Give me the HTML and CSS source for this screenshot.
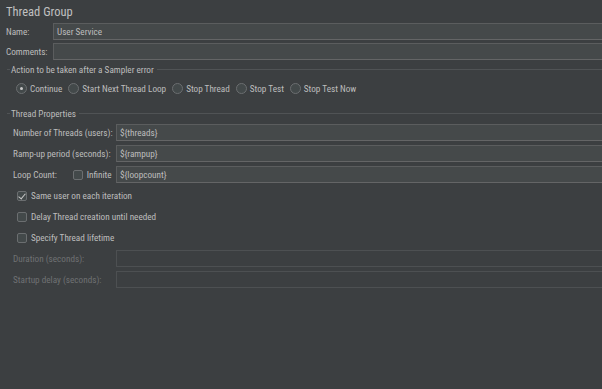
FILE: index.html
```html
<!DOCTYPE html>
<html lang="en">
<head>
    <meta charset="UTF-8">
    <title>Thread Group</title>
    <link rel="stylesheet" href="styles.css">
</head>
<body>
    <div class="panel">
        <h1 class="title">Thread Group</h1>

        <div class="row top-row">
            <label class="top-label">Name:</label>
            <div class="field">User Service</div>
        </div>
        <div class="row top-row">
            <label class="top-label">Comments:</label>
            <div class="field"></div>
        </div>

        <div class="group">
            <div class="legend"><span>Action to be taken after a Sampler error</span></div>
            <div class="radios">
                <div class="option"><span class="radio checked"></span>Continue</div>
                <div class="option"><span class="radio"></span>Start Next Thread Loop</div>
                <div class="option"><span class="radio"></span>Stop Thread</div>
                <div class="option"><span class="radio"></span>Stop Test</div>
                <div class="option"><span class="radio"></span>Stop Test Now</div>
            </div>
        </div>

        <div class="group props">
            <div class="legend"><span>Thread Properties</span></div>
            <div class="row prop-row">
                <label class="prop-label">Number of Threads (users):</label>
                <div class="field">${threads}</div>
            </div>
            <div class="row prop-row">
                <label class="prop-label">Ramp-up period (seconds):</label>
                <div class="field">${rampup}</div>
            </div>
            <div class="row prop-row">
                <label class="prop-label loop-label">
                    Loop Count:
                    <span class="option inline"><span class="check"></span>Infinite</span>
                </label>
                <div class="field">${loopcount}</div>
            </div>

            <div class="checks">
                <div class="option"><span class="check checked"></span>Same user on each iteration</div>
                <div class="option"><span class="check"></span>Delay Thread creation until needed</div>
                <div class="option"><span class="check"></span>Specify Thread lifetime</div>
            </div>

            <div class="row prop-row disabled">
                <label class="prop-label">Duration (seconds):</label>
                <div class="field"></div>
            </div>
            <div class="row prop-row disabled">
                <label class="prop-label">Startup delay (seconds):</label>
                <div class="field"></div>
            </div>
        </div>
    </div>
</body>
</html>
```

FILE: styles.css
```css
* {
    box-sizing: border-box;
    margin: 0;
    padding: 0;
}

body {
    font-family: "Roboto Condensed", Lato, sans-serif;
    font-size: 9.2px;
    background: #3c3f41;
    color: #bdbdbd;
    overflow: hidden;
    white-space: nowrap;
}

.panel {
    padding: 3px 0 0 6px;
}

.title {
    font-size: 12.5px;
    font-weight: normal;
    line-height: 17px;
    height: 20px;
    color: #c0c0c0;
}

.row {
    display: flex;
    align-items: center;
}

.top-row {
    height: 17px;
}

.top-row + .top-row {
    margin-top: 3px;
}

.top-label {
    width: 47px;
    flex-shrink: 0;
}

.field {
    flex: 1;
    height: 17px;
    background: #45494a;
    border: 1px solid #5b5d5e;
    border-bottom-color: #646566;
    border-right: none;
    line-height: 15px;
    padding-left: 3px;
    color: #bdbdbd;
}

.group {
    margin-top: 2px;
}

.legend {
    display: flex;
    align-items: center;
    height: 15px;
    padding-left: 1px;
}

.legend::before {
    content: "";
    width: 3px;
    border-top: 1px solid #505355;
    margin-right: 1px;
}

.legend::after {
    content: "";
    flex: 1;
    border-top: 1px solid #505355;
    margin-left: 3px;
}

.radios {
    display: flex;
    gap: 6px;
    padding: 3px 0 0 10px;
    height: 28px;
}

.option {
    display: flex;
    align-items: center;
    height: 17px;
}

.radio {
    width: 11px;
    height: 11px;
    border-radius: 50%;
    border: 1px solid #6b6e70;
    background: #43494a;
    margin-right: 3px;
    position: relative;
}

.radio.checked::after {
    content: "";
    position: absolute;
    left: 3px;
    top: 3px;
    width: 3px;
    height: 3px;
    border-radius: 50%;
    background: #c8c8c8;
}

.check {
    width: 10px;
    height: 10px;
    border: 1px solid #6b6e70;
    border-radius: 2px;
    background: #43494a;
    margin-right: 4px;
    position: relative;
}

.check.checked::after {
    content: "";
    position: absolute;
    left: 2px;
    top: 0;
    width: 3px;
    height: 6px;
    border-right: 1.5px solid #c8c8c8;
    border-bottom: 1.5px solid #c8c8c8;
    transform: rotate(40deg);
}

.props {
    margin-top: 1px;
}

.prop-row {
    height: 17px;
    margin-top: 4px;
    padding-left: 7px;
}

.props .legend + .prop-row {
    margin-top: 3px;
}

.prop-label {
    width: 103px;
    flex-shrink: 0;
    display: flex;
    align-items: center;
}

.loop-label .inline {
    margin-left: 16px;
}

.checks {
    display: flex;
    flex-direction: column;
    gap: 4px;
    padding: 4px 0 0 11px;
}

.disabled {
    color: #6f7173;
}

.disabled .field {
    background: transparent;
    border-color: #4d5052;
}
```
